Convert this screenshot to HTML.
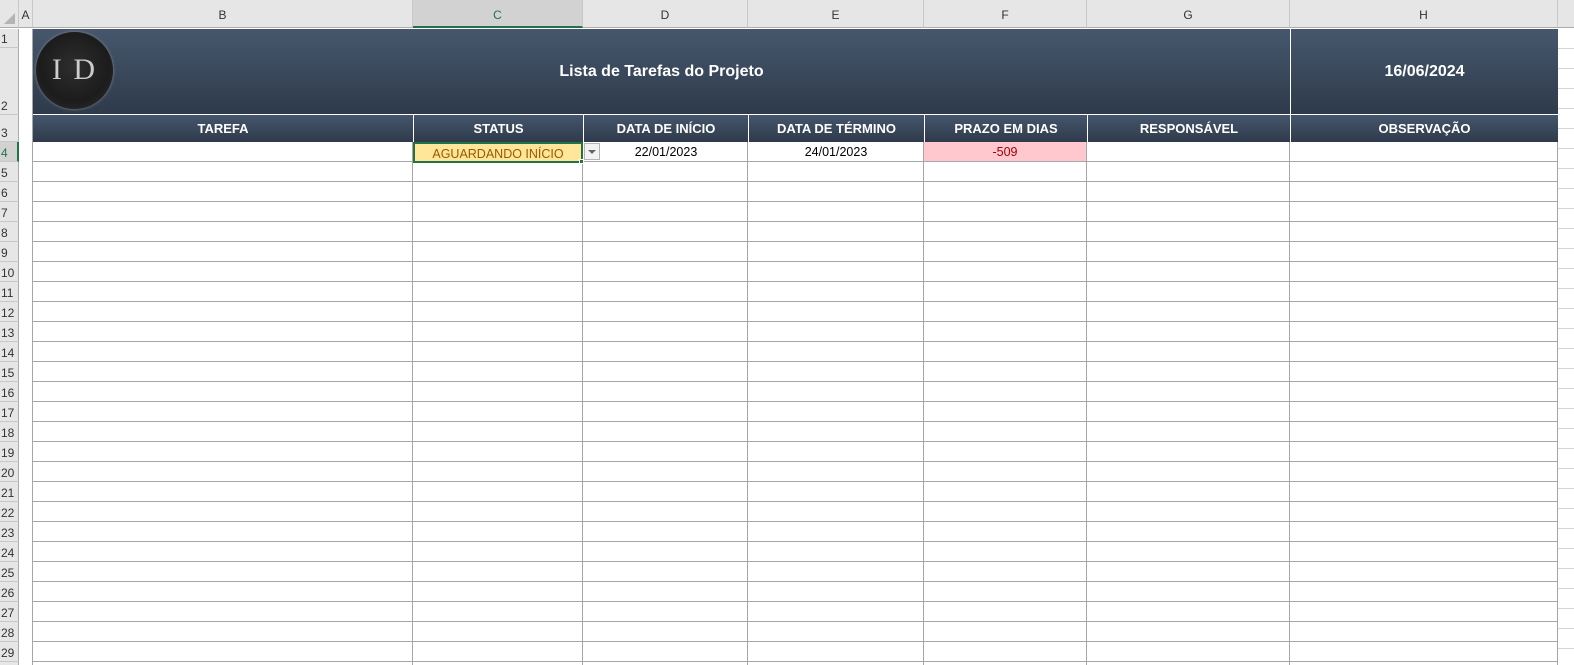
<!DOCTYPE html>
<html><head><meta charset="utf-8"><style>
*{margin:0;padding:0;box-sizing:border-box}
html,body{width:1574px;height:665px;overflow:hidden}
body{background:#fff;position:relative;font-family:"Liberation Sans",sans-serif}
.a{position:absolute}
.colh{position:absolute;top:0;height:28px;background:#e6e6e6;border-right:1px solid #c8c8c8;border-bottom:1px solid #ababab;font-size:12px;color:#333;text-align:center;line-height:30px}
.rh{position:absolute;left:0;width:19px;background:#e6e6e6;border-right:1px solid #ababab;border-bottom:1px solid #c8c8c8;font-size:12px;color:#333;padding-left:1px;display:flex;align-items:flex-end;line-height:16px}
.v{position:absolute;top:142px;height:523px;width:1px;background:#a6a6a6}
.hd{position:absolute;top:115px;height:27px;background:linear-gradient(#45566c,#2f3b4b);color:#fff;font-weight:bold;font-size:13px;text-align:center;line-height:28px;border-left:1px solid #fff}
.c{position:absolute;top:142px;height:20px;font-size:12.5px;text-align:center;line-height:21px;color:#000}
</style></head><body>
<div class="colh" style="left:0;width:19px"></div>
<div class="a" style="left:4px;top:13px;width:0;height:0;border-left:11px solid transparent;border-bottom:11px solid #b4b4b4"></div>
<div class="colh" style="left:19px;width:14px">A</div>
<div class="colh" style="left:33px;width:380px">B</div>
<div class="colh" style="left:413px;width:170px;background:#d2d2d2;border-bottom:2px solid #217346;color:#217346">C</div>
<div class="colh" style="left:583px;width:165px">D</div>
<div class="colh" style="left:748px;width:176px">E</div>
<div class="colh" style="left:924px;width:163px">F</div>
<div class="colh" style="left:1087px;width:203px">G</div>
<div class="colh" style="left:1290px;width:268px">H</div>
<div class="colh" style="left:1558px;width:16px;border-right:none"></div>

<div class="a" style="left:33px;top:142px;width:1525px;height:523px;background:repeating-linear-gradient(to bottom,transparent 0,transparent 19px,#a6a6a6 19px,#a6a6a6 20px)"></div>
<div class="a" style="left:1558px;top:29px;width:16px;height:636px;background:repeating-linear-gradient(to bottom,transparent 0,transparent 19px,#d4d4d4 19px,#d4d4d4 20px)"></div>
<div class="v" style="left:32px;top:29px;height:636px"></div>
<div class="v" style="left:412px"></div><div class="v" style="left:582px"></div><div class="v" style="left:747px"></div><div class="v" style="left:923px"></div><div class="v" style="left:1086px"></div><div class="v" style="left:1289px"></div><div class="v" style="left:1557px"></div>

<div class="a" style="left:33px;top:29px;width:1257px;height:86px;background:linear-gradient(#46576d,#2e3a4a);color:#fff;font-weight:bold;font-size:16px;text-align:center;line-height:86px">Lista de Tarefas do Projeto</div>
<div class="a" style="left:1290px;top:29px;width:268px;height:86px;background:linear-gradient(#46576d,#2e3a4a);border-left:1px solid #fff;color:#fff;font-weight:bold;font-size:16px;text-align:center;line-height:86px">16/06/2024</div>
<div class="a" style="left:33px;top:114px;width:1525px;height:1px;background:#fff"></div>
<div class="a" style="left:36px;top:32px;width:77px;height:77px;border-radius:50%;background:radial-gradient(circle at 50% 45%,#2e2e2e 0,#1c1c1c 60%,#2a2a2a 88%,#9a9a9a 96%,#555 100%);color:#ccc;font-family:'Liberation Serif',serif;font-size:30px;text-align:center;line-height:75px;letter-spacing:2px;box-shadow:0 0 3px #888">I D</div>

<div class="hd" style="left:33px;width:380px;border-left:none">TAREFA</div>
<div class="hd" style="left:413px;width:170px">STATUS</div>
<div class="hd" style="left:583px;width:165px">DATA DE INÍCIO</div>
<div class="hd" style="left:748px;width:176px">DATA DE TÉRMINO</div>
<div class="hd" style="left:924px;width:163px">PRAZO EM DIAS</div>
<div class="hd" style="left:1087px;width:203px">RESPONSÁVEL</div>
<div class="hd" style="left:1290px;width:268px">OBSERVAÇÃO</div>

<div class="c" style="left:413px;width:170px;height:21px;background:#ffe699;color:#9c5700;border:2px solid #217346">AGUARDANDO INÍCIO</div>
<div class="a" style="left:579px;top:159px;width:5px;height:5px;background:#217346;border:1px solid #fff"></div>
<div class="a" style="left:584px;top:143px;width:16px;height:17px;background:#f2f2f2;border:1px solid #b4b4b4"></div>
<div class="a" style="left:588px;top:150px;width:0;height:0;border-left:4px solid transparent;border-right:4px solid transparent;border-top:4px solid #666"></div>
<div class="c" style="left:600px;width:132px">22/01/2023</div>
<div class="c" style="left:748px;width:176px">24/01/2023</div>
<div class="c" style="left:924px;width:162px;height:19px;background:#ffc7ce;color:#9c0006">-509</div>

<div class="rh" style="top:29px;height:19px">1</div>
<div class="rh" style="top:48px;height:67px">2</div>
<div class="rh" style="top:115px;height:27px">3</div>
<div class="rh" style="top:142px;height:20px;background:#d2d2d2;color:#217346;border-right:2px solid #217346">4</div>
<div class="rh" style="top:162px;height:20px">5</div>
<div class="rh" style="top:182px;height:20px">6</div>
<div class="rh" style="top:202px;height:20px">7</div>
<div class="rh" style="top:222px;height:20px">8</div>
<div class="rh" style="top:242px;height:20px">9</div>
<div class="rh" style="top:262px;height:20px">10</div>
<div class="rh" style="top:282px;height:20px">11</div>
<div class="rh" style="top:302px;height:20px">12</div>
<div class="rh" style="top:322px;height:20px">13</div>
<div class="rh" style="top:342px;height:20px">14</div>
<div class="rh" style="top:362px;height:20px">15</div>
<div class="rh" style="top:382px;height:20px">16</div>
<div class="rh" style="top:402px;height:20px">17</div>
<div class="rh" style="top:422px;height:20px">18</div>
<div class="rh" style="top:442px;height:20px">19</div>
<div class="rh" style="top:462px;height:20px">20</div>
<div class="rh" style="top:482px;height:20px">21</div>
<div class="rh" style="top:502px;height:20px">22</div>
<div class="rh" style="top:522px;height:20px">23</div>
<div class="rh" style="top:542px;height:20px">24</div>
<div class="rh" style="top:562px;height:20px">25</div>
<div class="rh" style="top:582px;height:20px">26</div>
<div class="rh" style="top:602px;height:20px">27</div>
<div class="rh" style="top:622px;height:20px">28</div>
<div class="rh" style="top:642px;height:20px">29</div>
<div class="rh" style="top:662px;height:20px"></div>
</body></html>
